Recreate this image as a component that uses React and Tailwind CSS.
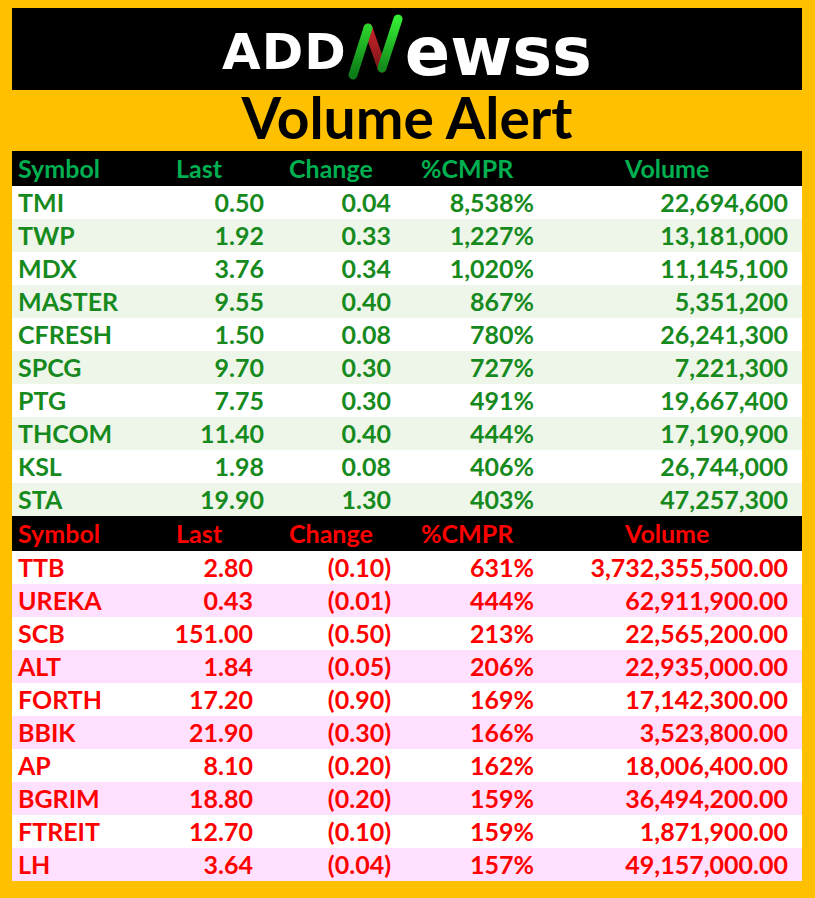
const green = [
  ['TMI', '0.50', '0.04', '8,538%', '22,694,600'],
  ['TWP', '1.92', '0.33', '1,227%', '13,181,000'],
  ['MDX', '3.76', '0.34', '1,020%', '11,145,100'],
  ['MASTER', '9.55', '0.40', '867%', '5,351,200'],
  ['CFRESH', '1.50', '0.08', '780%', '26,241,300'],
  ['SPCG', '9.70', '0.30', '727%', '7,221,300'],
  ['PTG', '7.75', '0.30', '491%', '19,667,400'],
  ['THCOM', '11.40', '0.40', '444%', '17,190,900'],
  ['KSL', '1.98', '0.08', '406%', '26,744,000'],
  ['STA', '19.90', '1.30', '403%', '47,257,300'],
];

const red = [
  ['TTB', '2.80', '(0.10)', '631%', '3,732,355,500.00'],
  ['UREKA', '0.43', '(0.01)', '444%', '62,911,900.00'],
  ['SCB', '151.00', '(0.50)', '213%', '22,565,200.00'],
  ['ALT', '1.84', '(0.05)', '206%', '22,935,000.00'],
  ['FORTH', '17.20', '(0.90)', '169%', '17,142,300.00'],
  ['BBIK', '21.90', '(0.30)', '166%', '3,523,800.00'],
  ['AP', '8.10', '(0.20)', '162%', '18,006,400.00'],
  ['BGRIM', '18.80', '(0.20)', '159%', '36,494,200.00'],
  ['FTREIT', '12.70', '(0.10)', '159%', '1,871,900.00'],
  ['LH', '3.64', '(0.04)', '157%', '49,157,000.00'],
];

const cols = 'grid grid-cols-[160px_112px_133px_204px_181px]';

function Logo() {
  return (
    <div className="flex items-center justify-center h-[82px] bg-black font-['DejaVu_Sans',sans-serif] font-bold text-white leading-none">
      <span className="text-[50px] tracking-[1px] mt-[6px]">ADD</span>
      <svg width="56" height="66" viewBox="0 0 56 66" className="mx-[1px] -mt-[4px]">
        <defs>
          <linearGradient id="gl" x1="0" y1="1" x2="0" y2="0">
            <stop offset="0" stopColor="#0b7a17" />
            <stop offset="1" stopColor="#2bd12b" />
          </linearGradient>
          <linearGradient id="gr" x1="0" y1="0" x2="0" y2="1">
            <stop offset="0" stopColor="#33ee33" />
            <stop offset="1" stopColor="#148a1c" />
          </linearGradient>
          <linearGradient id="rd" x1="0" y1="0" x2="0" y2="1">
            <stop offset="0" stopColor="#c8262b" />
            <stop offset="1" stopColor="#7c1518" />
          </linearGradient>
        </defs>
        <line x1="20" y1="14" x2="34" y2="54" stroke="url(#rd)" strokeWidth="9" strokeLinecap="round" />
        <line x1="5" y1="61" x2="20" y2="14" stroke="url(#gl)" strokeWidth="9" strokeLinecap="round" />
        <line x1="34" y1="54" x2="50" y2="5" stroke="url(#gr)" strokeWidth="9" strokeLinecap="round" />
      </svg>
      <span className="text-[67px] mt-[6px]">ewss</span>
    </div>
  );
}

function Section({ rows, head, text, alt, lastPr }) {
  return (
    <div>
      <div className={`${cols} h-[35px] items-center bg-black ${head}`}>
        <div className="pl-[6px]">Symbol</div>
        <div className="pl-[4px]">Last</div>
        <div className="pl-[5px]">Change</div>
        <div className="pl-[4px]">%CMPR</div>
        <div className="pl-[4px]">Volume</div>
      </div>
      {rows.map((r, i) => (
        <div key={r[0]} className={`${cols} h-[33px] items-center ${text} ${i % 2 ? alt : 'bg-white'}`}>
          <div className="pl-[6px]">{r[0]}</div>
          <div className={`text-right ${lastPr}`}>{r[1]}</div>
          <div className="text-right pr-[26px]">{r[2]}</div>
          <div className="text-right pr-[87px]">{r[3]}</div>
          <div className="flex justify-end whitespace-nowrap pr-[14px]">{r[4]}</div>
        </div>
      ))}
    </div>
  );
}

export default function App() {
  return (
    <div className="w-[815px] h-[898px] bg-[#ffc000] pt-[8px] pl-[12px] pr-[13px] pb-[15px]">
      <Logo />
      <div className="h-[61px] flex items-center justify-center pb-[6px] font-['Lato',sans-serif] font-bold text-[57px] text-black leading-none">
        Volume Alert
      </div>
      <div className="font-['Lato',sans-serif] font-bold text-[25px] leading-none">
        <Section rows={green} head="text-[#00b050]" text="text-[#178a1e]" alt="bg-[#eef6ea]" lastPr="pr-[20px]" />
        <Section rows={red} head="text-[#ff0000]" text="text-[#ff0000]" alt="bg-[#ffe0fe]" lastPr="pr-[31px]" />
      </div>
    </div>
  );
}
